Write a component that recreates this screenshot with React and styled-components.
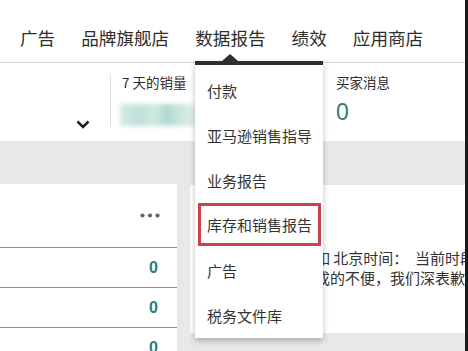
import React from "react";
import styled, { createGlobalStyle } from "styled-components";

const GlobalStyle = createGlobalStyle`
  html, body {
    margin: 0;
    padding: 0;
    background: #fff;
  }
  * {
    box-sizing: border-box;
  }
`;

const navItems = ["广告", "品牌旗舰店", "数据报告", "绩效", "应用商店"];
const menuItems = ["付款", "亚马逊销售指导", "业务报告", "库存和销售报告", "广告", "税务文件库"];

const App = () => {
  return (
    <Page>
      <GlobalStyle />
      <Nav>
        {navItems.map((item) => (
          <NavItem key={item}>{item}</NavItem>
        ))}
      </Nav>

      <Summary>
        <Toggle>
          <svg width="14" height="9" viewBox="0 0 14 9">
            <polyline points="1.5,1.5 7,7 12.5,1.5" fill="none" stroke="#1f1f1f" strokeWidth="2.6" />
          </svg>
        </Toggle>
        <Metric $divider>
          <MetricLabel>7 天的销量</MetricLabel>
          <BlurredValue />
        </Metric>
        <Metric>
          <MetricLabel>买家消息</MetricLabel>
          <MetricValue>0</MetricValue>
        </Metric>
      </Summary>

      <Main>
        <ListCard>
          <CardHead>
            <svg width="20" height="5" viewBox="0 0 20 5">
              <circle cx="2.5" cy="2.5" r="2.1" fill="#666" />
              <circle cx="10" cy="2.5" r="2.1" fill="#666" />
              <circle cx="17.5" cy="2.5" r="2.1" fill="#666" />
            </svg>
          </CardHead>
          <Row><Count>0</Count></Row>
          <Row><Count>0</Count></Row>
          <Row><Count>0</Count></Row>
        </ListCard>
        <NoticeCard>
          <NoticeLine>平台计划维护：如 北京时间：&nbsp;&nbsp;当前时段系统正在升级</NoticeLine>
          <NoticeLine>对于由此给您造成的不便，我们深表歉意。</NoticeLine>
        </NoticeCard>
      </Main>

      <Menu>
        {menuItems.map((item, i) => (
          <MenuItem key={i} $highlight={i === 3}>{item}</MenuItem>
        ))}
      </Menu>
    </Page>
  );
};

const Page = styled.div`
  position: relative;
  width: 468px;
  height: 351px;
  overflow: hidden;
  background: #fff;
  border-right: 3px solid #1a1a1a;
  font-family: "Noto Sans CJK SC", "Liberation Sans", sans-serif;
  color: #333;
`;

const Nav = styled.nav`
  display: flex;
  align-items: center;
  gap: 26px;
  height: 63px;
  padding: 14px 0 0 20px;
  border-bottom: 1px solid #d6d6d6;
`;

const NavItem = styled.span`
  font-size: 17.6px;
  line-height: 20px;
  color: #2e2e2e;
  white-space: nowrap;
`;

const Summary = styled.div`
  display: grid;
  grid-template-columns: 110px 213px 1fr;
  height: 78px;
  background: #fff;
`;

const Toggle = styled.div`
  display: flex;
  justify-content: flex-end;
  align-items: flex-end;
  padding: 0 20px 12px 0;
`;

const Metric = styled.div`
  display: flex;
  flex-direction: column;
  align-items: flex-start;
  margin-top: 12px;
  height: 51px;
  padding-left: ${(p) => (p.$divider ? "11px" : "13px")};
  border-left: ${(p) => (p.$divider ? "1px solid #dcdcdc" : "none")};
`;

const MetricLabel = styled.div`
  font-size: 13.5px;
  line-height: 14px;
  color: #2b2b2b;
  white-space: nowrap;
`;

const BlurredValue = styled.div`
  margin-top: 15px;
  margin-left: -2px;
  width: 76px;
  height: 23px;
  background: linear-gradient(90deg, #d3eae5 0%, #bfe0d8 25%, #d0e9e3 45%, #afd9ce 62%, #cbe7e0 80%, #dff0ec 100%);
  filter: blur(2px);
`;

const MetricValue = styled.div`
  margin-top: 11px;
  font-family: "Liberation Sans", "Noto Sans", sans-serif;
  font-size: 23px;
  line-height: 24px;
  color: #2e7d72;
`;

const Main = styled.div`
  display: flex;
  align-items: flex-start;
  gap: 13px;
  height: 210px;
  padding-top: 43px;
  background: #e8e8ea;
`;

const ListCard = styled.div`
  flex: 0 0 177px;
  background: #fff;
`;

const CardHead = styled.div`
  display: flex;
  justify-content: flex-end;
  align-items: center;
  height: 63px;
  padding: 0 17px 0 0;
`;

const Row = styled.div`
  display: flex;
  justify-content: flex-end;
  align-items: center;
  height: 40px;
  padding-right: 19px;
  border-top: 1px solid #8c8c8c;
`;

const Count = styled.span`
  font-family: "Liberation Sans", "Noto Sans", sans-serif;
  font-size: 16px;
  font-weight: bold;
  color: #2b7b86;
`;

const NoticeCard = styled.div`
  flex: 0 0 320px;
  height: 148px;
  margin-top: 1px;
  padding: 63px 0 0 20px;
  background: #fff;
`;

const NoticeLine = styled.div`
  font-size: 15px;
  line-height: 20px;
  white-space: nowrap;
  color: #333;
`;

const Menu = styled.ul`
  position: absolute;
  top: 61px;
  left: 195px;
  width: 128px;
  margin: 0;
  padding: 3px 0 0;
  list-style: none;
  background: #fff;
  border-top: 4px solid #2f2f2f;
  box-shadow: 0 3px 6px rgba(0, 0, 0, 0.25);

  &::before {
    content: "";
    position: absolute;
    top: -11px;
    left: 27px;
    border-left: 8px solid transparent;
    border-right: 8px solid transparent;
    border-bottom: 7px solid #2f2f2f;
  }
`;

const MenuItem = styled.li`
  display: flex;
  align-items: center;
  height: ${(p) => (p.$highlight ? "43px" : "45px")};
  margin: ${(p) => (p.$highlight ? "0 2px 2px 3px" : "0")};
  padding-left: ${(p) => (p.$highlight ? "6px" : "12px")};
  border: ${(p) => (p.$highlight ? "3px solid #c9434f" : "none")};
  font-size: 15px;
  color: #333;
  white-space: nowrap;
`;

export default App;
